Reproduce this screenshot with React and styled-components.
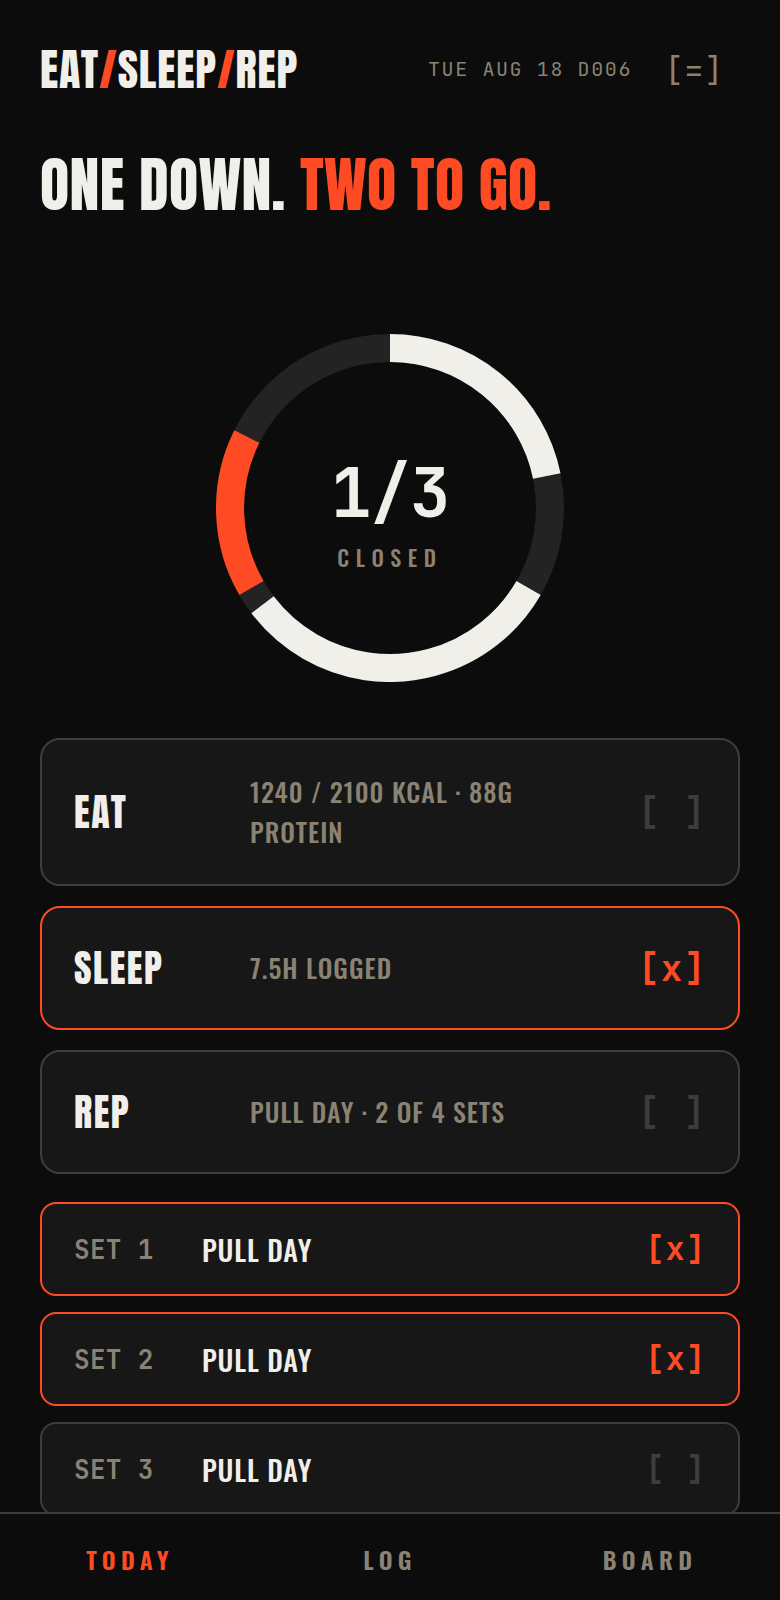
import React, { useState } from 'react';
import styled, { createGlobalStyle } from 'styled-components';

const GlobalStyle = createGlobalStyle`
  * {
    box-sizing: border-box;
  }

  body {
    margin: 0;
    background: #0c0c0c;
    color: #f0efe9;
    font-family: Oswald, "Liberation Sans", sans-serif;
    letter-spacing: 0.02em;
  }

  button {
    font: inherit;
    letter-spacing: inherit;
    border: 0;
    background: none;
    cursor: pointer;
  }
`;

const Shell = styled.div`
  display: flex;
  flex-direction: column;
  height: 100vh;
`;

const Content = styled.main`
  flex: 1;
  min-height: 0;
  padding: 32px 40px 0;
  overflow-y: auto;
  scrollbar-width: none;
`;

const Header = styled.header`
  display: flex;
  align-items: center;
  height: 74px;
`;

const Logo = styled.div`
  flex: 1;
  font-family: Anton, "Liberation Sans", sans-serif;
  font-size: 44px;
  line-height: 74px;
  letter-spacing: 0.02em;
`;

const Accent = styled.span`
  color: #ff4b24;
`;

const DateStamp = styled.span`
  font-family: "JetBrains Mono", "Liberation Mono", monospace;
  font-size: 20px;
  letter-spacing: 0.08em;
  color: #8a8373;
`;

const MenuButton = styled.button`
  width: 88px;
  height: 74px;
  margin-left: 20px;
  padding: 0 4px 0 0;
  && {
    font-family: "JetBrains Mono", "Liberation Mono", monospace;
    font-size: 32px;
  }
  color: #8a8373;
`;

const Headline = styled.h1`
  margin: 32px 0 0;
  font-family: Anton, "Liberation Sans", sans-serif;
  font-size: 60px;
  font-weight: 400;
  line-height: 94px;
  letter-spacing: 0.005em;
`;

const RingWrap = styled.section`
  display: grid;
  place-items: center;
  margin: 102px 0 56px;

  > * {
    grid-area: 1 / 1;
  }
`;

const RingSvg = styled.svg`
  display: block;
  width: 348px;
  height: 348px;
`;

const RingText = styled.div`
  display: flex;
  flex-direction: column;
  align-items: center;
  padding-top: 16px;
`;

const RingCount = styled.div`
  font-family: "JetBrains Mono", "Liberation Mono", monospace;
  font-size: 68px;
  font-weight: 700;
  line-height: 68px;
  letter-spacing: -0.02em;
`;

const RingLabel = styled.div`
  margin-top: 14px;
  font-size: 22px;
  font-weight: 500;
  line-height: 32px;
  letter-spacing: 0.3em;
  color: #8a8373;
`;

const CardList = styled.div`
  display: flex;
  flex-direction: column;
  gap: 20px;
`;

const SetList = styled.div`
  display: flex;
  flex-direction: column;
  gap: 16px;
  margin-top: 28px;
`;

const CardBase = styled.label`
  display: grid;
  align-items: center;
  padding: 0 32px;
  border: 2px solid ${({ $done }) => ($done ? '#ff4b24' : '#3d3d3d')};
  background: #171717;
  cursor: pointer;
`;

const TaskCard = styled(CardBase)`
  grid-template-columns: 144px 1fr auto;
  gap: 32px;
  min-height: 124px;
  padding-top: 32px;
  padding-bottom: 32px;
  border-radius: 20px;
`;

const SetCard = styled(CardBase)`
  grid-template-columns: 96px 1fr auto;
  gap: 32px;
  min-height: 94px;
  border-radius: 16px;
`;

const HiddenCheck = styled.input`
  position: absolute;
  opacity: 0;
  pointer-events: none;
`;

const TaskName = styled.span`
  font-family: Anton, "Liberation Sans", sans-serif;
  font-size: 38px;
  line-height: 56px;
  letter-spacing: 0.04em;
`;

const TaskDetail = styled.span`
  font-size: 26px;
  font-weight: 500;
  line-height: 40px;
  letter-spacing: 0.04em;
  color: #8a8373;
`;

const SetNumber = styled.span`
  font-family: "JetBrains Mono", "Liberation Mono", monospace;
  font-size: 26px;
  font-weight: 600;
  color: #8a8373;
`;

const SetName = styled.span`
  font-size: 28px;
  font-weight: 500;
  letter-spacing: 0.03em;
`;

const Mark = styled.span`
  font-family: "JetBrains Mono", "Liberation Mono", monospace;
  font-size: ${({ $size }) => $size}px;
  font-weight: 700;
  line-height: 48px;
  letter-spacing: 1px;
  white-space: pre;
  color: ${({ $done }) => ($done ? '#ff4b24' : '#3d3d3d')};
`;

const TabBar = styled.nav`
  display: grid;
  grid-template-columns: repeat(3, 1fr);
  height: 88px;
  border-top: 2px solid #3d3d3d;
`;

const Tab = styled.button`
  padding: 4px 0 0;
  && {
    font-size: 24px;
    font-weight: 600;
    letter-spacing: 0.22em;
  }
  color: ${({ $active }) => ($active ? '#ff4b24' : '#8a8373')};
`;

// each segment owns a third of the ring, value is how much of it is filled
const segments = [
  { id: 'eat', value: 0.654, color: '#f0efe9' },
  { id: 'sleep', value: 0.94, color: '#f0efe9' },
  { id: 'rep', value: 0.471, color: '#ff4b24' }
];

const initialTasks = [
  { id: 'eat', name: 'EAT', detail: '1240 / 2100 KCAL · 88G PROTEIN', done: false },
  { id: 'sleep', name: 'SLEEP', detail: '7.5H LOGGED', done: true },
  { id: 'rep', name: 'REP', detail: 'PULL DAY · 2 OF 4 SETS', done: false }
];

const initialSets = [
  { id: 1, name: 'PULL DAY', done: true },
  { id: 2, name: 'PULL DAY', done: true },
  { id: 3, name: 'PULL DAY', done: false }
];

const tabs = ['TODAY', 'LOG', 'BOARD'];

const toggle = (items, id) =>
  items.map((item) => (item.id === id ? { ...item, done: !item.done } : item));

const Ring = () => (
  <RingSvg viewBox="0 0 348 348" aria-hidden="true">
    <circle cx="174" cy="174" r="160" fill="none" stroke="#232323" strokeWidth="28" />
    {segments.map((segment, index) => (
      <circle
        key={segment.id}
        cx="174"
        cy="174"
        r="160"
        fill="none"
        stroke={segment.color}
        strokeWidth="28"
        pathLength="360"
        strokeDasharray={`${segment.value * 120} 360`}
        transform={`rotate(${index * 120 - 90} 174 174)`}
      />
    ))}
  </RingSvg>
);

const CheckMark = ({ done, size }) => (
  <Mark $done={done} $size={size} aria-hidden="true">
    {done ? '[x]' : '[ ]'}
  </Mark>
);

const App = () => {
  const [tasks, setTasks] = useState(initialTasks);
  const [sets, setSets] = useState(initialSets);
  const [activeTab, setActiveTab] = useState('TODAY');

  const closed = tasks.filter((task) => task.done).length;

  return (
    <Shell>
      <GlobalStyle />
      <Content>
        <Header>
          <Logo>
            EAT<Accent>/</Accent>SLEEP<Accent>/</Accent>REP
          </Logo>
          <DateStamp>TUE AUG 18 D006</DateStamp>
          <MenuButton type="button" aria-label="Menu">[=]</MenuButton>
        </Header>

        <Headline>
          ONE DOWN. <Accent>TWO TO GO.</Accent>
        </Headline>

        <RingWrap>
          <Ring />
          <RingText>
            <RingCount>{closed}/{tasks.length}</RingCount>
            <RingLabel>CLOSED</RingLabel>
          </RingText>
        </RingWrap>

        <CardList>
          {tasks.map((task) => (
            <TaskCard key={task.id} $done={task.done}>
              <TaskName>{task.name}</TaskName>
              <TaskDetail>{task.detail}</TaskDetail>
              <HiddenCheck
                type="checkbox"
                checked={task.done}
                onChange={() => setTasks(toggle(tasks, task.id))}
              />
              <CheckMark done={task.done} size={36} />
            </TaskCard>
          ))}
        </CardList>

        <SetList>
          {sets.map((set) => (
            <SetCard key={set.id} $done={set.done}>
              <SetNumber>SET {set.id}</SetNumber>
              <SetName>{set.name}</SetName>
              <HiddenCheck
                type="checkbox"
                checked={set.done}
                onChange={() => setSets(toggle(sets, set.id))}
              />
              <CheckMark done={set.done} size={32} />
            </SetCard>
          ))}
        </SetList>
      </Content>

      <TabBar>
        {tabs.map((tab) => (
          <Tab
            key={tab}
            type="button"
            $active={tab === activeTab}
            onClick={() => setActiveTab(tab)}
          >
            {tab}
          </Tab>
        ))}
      </TabBar>
    </Shell>
  );
};

export default App;
